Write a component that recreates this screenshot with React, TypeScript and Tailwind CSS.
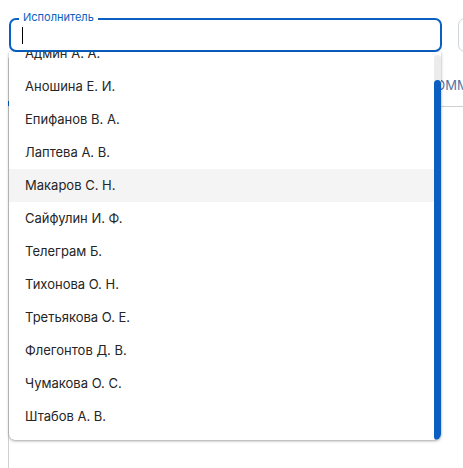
const people = [
  "Админ А. А.",
  "Аношина Е. И.",
  "Епифанов В. А.",
  "Лаптева А. В.",
  "Макаров С. Н.",
  "Сайфулин И. Ф.",
  "Телеграм Б.",
  "Тихонова О. Н.",
  "Третьякова О. Е.",
  "Флегонтов Д. В.",
  "Чумакова О. С.",
  "Штабов А. В.",
];

export default function App() {
  return (
    <div className="relative w-[463px] h-[468px] bg-white overflow-hidden font-['Inter',sans-serif]">
      {/* filter row */}
      <div className="flex gap-[16px] pl-[9px] pt-[18px]">
        <div className="relative w-[433px] h-[34px] shrink-0 border-2 border-[#0a5fc0] rounded-[7px] flex items-center pl-[11px]">
          <span className="absolute -top-[10px] left-[8px] px-[4px] bg-white text-[11px] leading-[14px] text-[#0a5fc0]">
            Исполнитель
          </span>
          <div className="w-px h-[17px] bg-black" />
        </div>
        <div className="w-[40px] h-[34px] shrink-0 border border-gray-300 rounded-[7px]" />
      </div>

      {/* page content behind */}
      <div className="ml-[8px] mt-[6px] h-[420px] border-l border-[#d0d0d0] relative">
        <div className="flex justify-end pt-[18px]">
          <div className="w-[35px] overflow-hidden border-b border-[#cfcfcf] pb-[12px]">
            <span className="block whitespace-nowrap text-[13px] leading-[18px] text-[#5674a6] -ml-[1px]">
              КОММЕНТАРИИ
            </span>
          </div>
        </div>
        <div className="absolute -left-px top-[43px] w-px h-[5px] bg-[#0a5fc0]" />
      </div>

      {/* dropdown menu */}
      <div className="absolute left-[9px] top-[52px] w-[432px] h-[388px] bg-white rounded-b-[6px] overflow-hidden shadow-[0_1px_3px_rgba(0,0,0,0.35),0_0_1px_rgba(0,0,0,0.2)]">
        <ul className="-mt-[15px] w-[425px]">
          {people.map((name) => (
            <li
              key={name}
              className={`h-[33px] flex items-center pl-[16px] text-[13px] text-[#252525] ${
                name === "Макаров С. Н." ? "bg-[#f4f4f4]" : ""
              }`}
            >
              {name}
            </li>
          ))}
        </ul>
        <div className="absolute right-0 top-[3px] bottom-0 w-[7px] bg-[#ececec] rounded-t-[4px]">
          <div className="absolute left-0 right-0 top-[25px] bottom-0 bg-[#0a5fc0] rounded-[4px]" />
        </div>
      </div>
    </div>
  );
}
